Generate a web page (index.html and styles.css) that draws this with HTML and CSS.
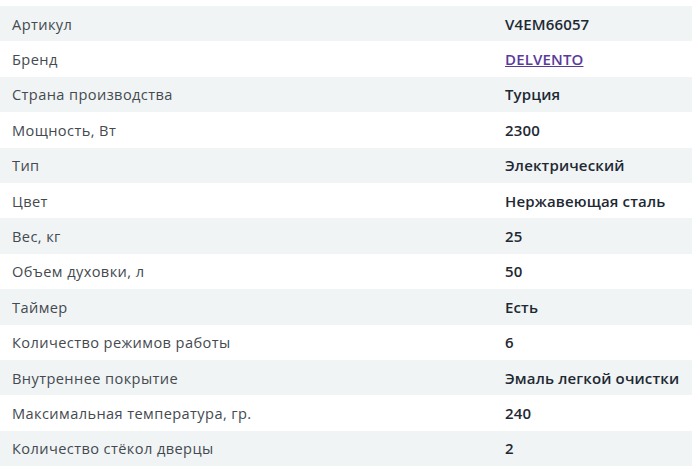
FILE: index.html
```html
<!DOCTYPE html>
<html lang="ru">
<head>
<meta charset="utf-8">
<link rel="stylesheet" href="styles.css">
</head>
<body>
<div class="specs">
  <div class="row"><div class="label">Артикул</div><div class="value">V4EM66057</div></div>
  <div class="row"><div class="label">Бренд</div><div class="value"><a href="#" class="link">DELVENTO</a></div></div>
  <div class="row"><div class="label">Страна производства</div><div class="value">Турция</div></div>
  <div class="row"><div class="label">Мощность, Вт</div><div class="value">2300</div></div>
  <div class="row"><div class="label">Тип</div><div class="value">Электрический</div></div>
  <div class="row"><div class="label">Цвет</div><div class="value">Нержавеющая сталь</div></div>
  <div class="row"><div class="label">Вес, кг</div><div class="value">25</div></div>
  <div class="row"><div class="label">Объем духовки, л</div><div class="value">50</div></div>
  <div class="row"><div class="label">Таймер</div><div class="value">Есть</div></div>
  <div class="row"><div class="label">Количество режимов работы</div><div class="value">6</div></div>
  <div class="row"><div class="label">Внутреннее покрытие</div><div class="value">Эмаль легкой очистки</div></div>
  <div class="row"><div class="label">Максимальная температура, гр.</div><div class="value">240</div></div>
  <div class="row"><div class="label">Количество стёкол дверцы</div><div class="value">2</div></div>
</div>
</body>
</html>
```
FILE: styles.css
```css
html, body {
  margin: 0;
  padding: 0;
  background: #ffffff;
}
body {
  font-family: "Open Sans", "Noto Sans", sans-serif;
  font-size: 14px;
}
.specs {
  padding-top: 6px;
  display: flex;
  flex-direction: column;
}
.row {
  display: grid;
  grid-template-columns: 505px 1fr;
  height: 35.4px;
  align-items: center;
}
.row:nth-child(odd) {
  background: #f0f4f5;
}
.label {
  padding-left: 12px;
  font-size: 14.6px;
  letter-spacing: 0.4px;
  color: #444a4f;
}
.value {
  font-size: 15px;
  font-weight: 600;
  letter-spacing: 0.15px;
  color: #1e2933;
}
.link {
  color: #5a3a9a;
  text-decoration: underline;
}
```
